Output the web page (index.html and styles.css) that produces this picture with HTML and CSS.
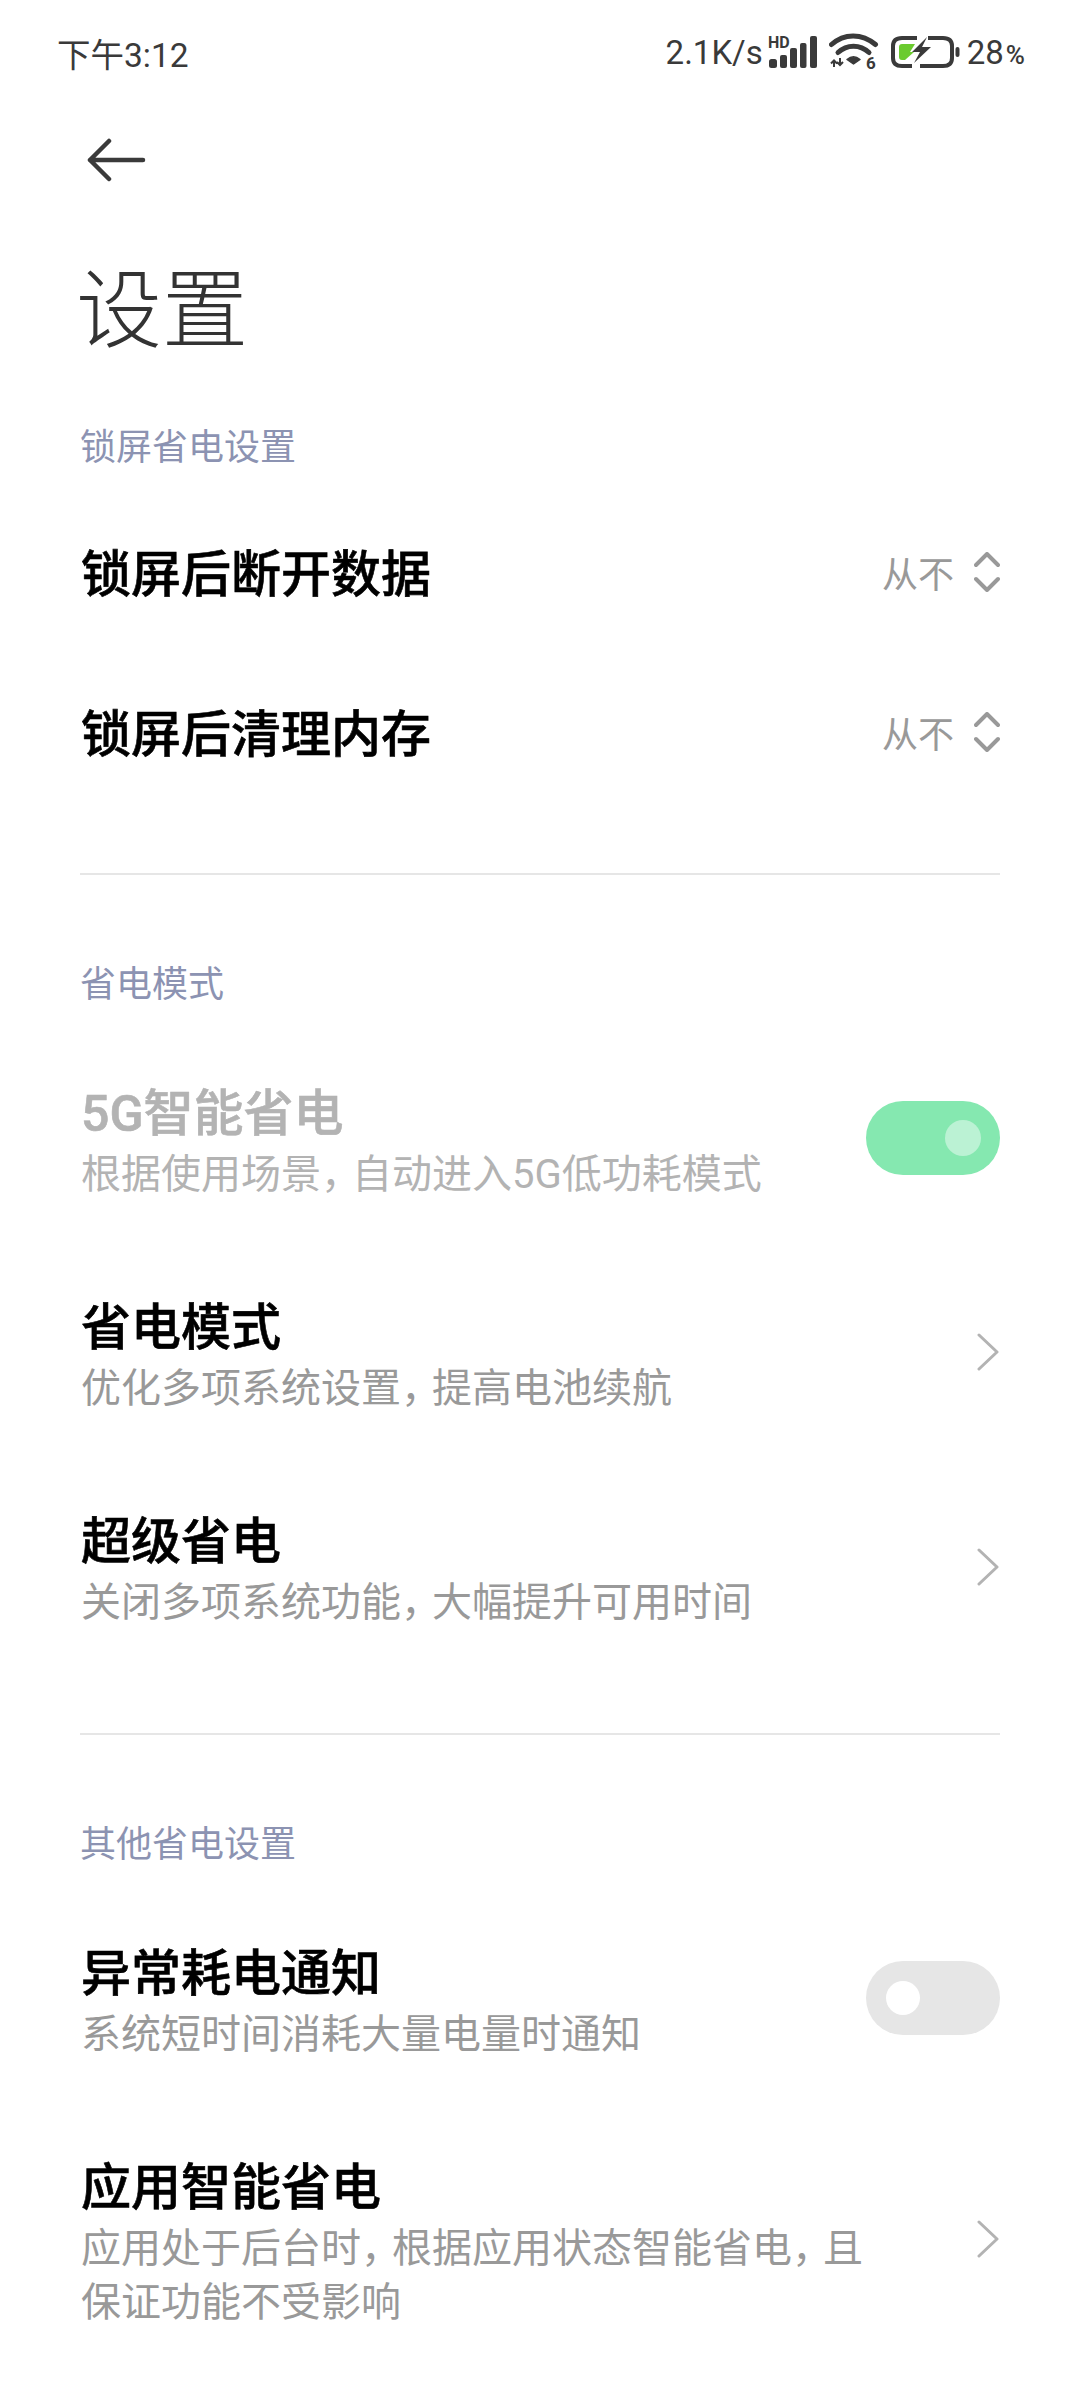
FILE: index.html
```html
<!DOCTYPE html>
<html lang="zh-CN">
<head>
<meta charset="utf-8">
<title>设置</title>
<link rel="stylesheet" href="styles.css">
</head>
<body>
<div class="status">
  <span class="time">下午3:12</span>
  <div class="status-right">
    <span class="speed">2.1K/s</span>
    <svg class="ic-signal" width="50" height="40" viewBox="0 -3 50 40">
      <text x="0" y="13" class="hd">HD</text>
      <rect x="1" y="24" width="8" height="9" rx="2.5" fill="#3a3a3a"/>
      <rect x="12" y="20" width="7" height="13" rx="2" fill="#3a3a3a"/>
      <rect x="22" y="13" width="7" height="20" rx="2" fill="#3a3a3a"/>
      <rect x="32" y="8" width="6.500" height="25" rx="2" fill="#3a3a3a"/>
      <rect x="42" y="1" width="7" height="32" rx="2" fill="#3a3a3a"/>
    </svg>
    <svg class="ic-wifi" width="50" height="42" viewBox="0 -3 50 42">
      <path d="M2.500 10.500C15-1 33-1 46.500 10.500" fill="none" stroke="#3a3a3a" stroke-width="5" stroke-linecap="round"/>
      <path d="M9 18.500C18 10 31 10 40 18.500" fill="none" stroke="#3a3a3a" stroke-width="5" stroke-linecap="round"/>
      <path d="M18 25.500C22 22 27 22 31 25.500L24.500 30Z" fill="#3a3a3a" stroke="#3a3a3a" stroke-width="1.500" stroke-linejoin="round"/>
      <path d="M5 27v6M2 29.500l3-3 3 3M11 24v7M8 28l3 3 3-3" fill="none" stroke="#3a3a3a" stroke-width="2"/>
      <text x="37" y="35" class="six">6</text>
    </svg>
    <svg class="ic-batt" width="70" height="32" viewBox="0 0 70 32">
      <path d="M27 2H12C6 2 3 5 3 10V22C3 27 6 30 12 30H22" fill="none" stroke="#3a3a3a" stroke-width="4"/>
      <path d="M38 2H53C59 2 62 5 62 10V22C62 27 59 30 53 30H30" fill="none" stroke="#3a3a3a" stroke-width="4"/>
      <path d="M9 11C9 9 10 8 12 8H25L20 16H24L15 24H12C10 24 9 23 9 21Z" fill="#6bcb2f"/>
      <path d="M37 1L22 16H30L24 27L41 11H32Z" fill="#3a3a3a"/>
      <rect x="65.500" y="11" width="4" height="10" rx="2" fill="#3a3a3a"/>
    </svg>
    <span class="pct">28<small>%</small></span>
  </div>
</div>

<div class="nav">
  <svg width="60" height="44" viewBox="0 0 60 44">
    <path d="M3 22H56M22 3L3 22L22 41" fill="none" stroke="#3a3a3a" stroke-width="4.500" stroke-linecap="round" stroke-linejoin="round"/>
  </svg>
</div>

<h1 class="page-title">设置</h1>

<div class="section-head first">锁屏省电设置</div>
<div class="row-single">
  <span class="row-title">锁屏后断开数据</span>
  <span class="value">从不</span>
  <svg class="updown" width="26" height="40" viewBox="0 0 26 40"><path d="M2 13L13 2L24 13M2 27L13 38L24 27" fill="none" stroke="#999" stroke-width="4" stroke-linecap="round" stroke-linejoin="round"/></svg>
</div>
<div class="row-single">
  <span class="row-title">锁屏后清理内存</span>
  <span class="value">从不</span>
  <svg class="updown" width="26" height="40" viewBox="0 0 26 40"><path d="M2 13L13 2L24 13M2 27L13 38L24 27" fill="none" stroke="#999" stroke-width="4" stroke-linecap="round" stroke-linejoin="round"/></svg>
</div>
<div class="divider"></div>

<div class="section-head">省电模式</div>
<div class="row disabled">
  <div class="row-text">
    <div class="row-title">5G智能省电</div>
    <div class="row-sub">根据使用场景<span class="comma">，</span>自动进入5G低功耗模式</div>
  </div>
  <div class="toggle on"><span class="knob"></span></div>
</div>
<div class="row">
  <div class="row-text">
    <div class="row-title">省电模式</div>
    <div class="row-sub">优化多项系统设置<span class="comma">，</span>提高电池续航</div>
  </div>
  <svg class="chev" width="22" height="38" viewBox="0 0 22 38"><path d="M2 2L20 19L2 36" fill="none" stroke="#b3b3b3" stroke-width="3" stroke-linecap="round" stroke-linejoin="round"/></svg>
</div>
<div class="row">
  <div class="row-text">
    <div class="row-title">超级省电</div>
    <div class="row-sub">关闭多项系统功能<span class="comma">，</span>大幅提升可用时间</div>
  </div>
  <svg class="chev" width="22" height="38" viewBox="0 0 22 38"><path d="M2 2L20 19L2 36" fill="none" stroke="#b3b3b3" stroke-width="3" stroke-linecap="round" stroke-linejoin="round"/></svg>
</div>
<div class="divider"></div>

<div class="section-head">其他省电设置</div>
<div class="row">
  <div class="row-text">
    <div class="row-title">异常耗电通知</div>
    <div class="row-sub">系统短时间消耗大量电量时通知</div>
  </div>
  <div class="toggle off"><span class="knob"></span></div>
</div>
<div class="row tall">
  <div class="row-text">
    <div class="row-title">应用智能省电</div>
    <div class="row-sub">应用处于后台时<span class="comma">，</span>根据应用状态智能省电<span class="comma">，</span>且保证功能不受影响</div>
  </div>
  <svg class="chev" width="22" height="38" viewBox="0 0 22 38"><path d="M2 2L20 19L2 36" fill="none" stroke="#b3b3b3" stroke-width="3" stroke-linecap="round" stroke-linejoin="round"/></svg>
</div>
</body>
</html>
```

FILE: styles.css
```css
* { box-sizing: border-box; }
html, body { margin: 0; padding: 0; background: #fff; }
body {
  width: 1080px;
  height: 2400px;
  overflow: hidden;
  font-family: Roboto, "Noto Sans CJK SC", sans-serif;
  color: #000;
}
.status {
  height: 104px;
  padding: 0 55px 0 57px;
  display: flex;
  align-items: center;
  justify-content: space-between;
  color: #3a3a3a;
  font-size: 33px;
}
.time { font-size: 33.500px; }
.status-right { display: flex; align-items: center; }
.speed { margin-right: 5px; }
.ic-wifi { margin-left: 11px; }
.ic-batt { margin-left: 11px; }
.pct { margin-left: 7px; }
.pct small { font-size: 26px; font-weight: 500; margin-left: 2px; }
.hd { font: 700 16px Roboto, sans-serif; fill: #3a3a3a; }
.six { font: 700 17px Roboto, sans-serif; fill: #3a3a3a; }
.nav { height: 112px; padding-left: 87px; display: flex; align-items: center; }
.page-title {
  margin: 37px 0 0;
  padding-left: 76px;
  height: 117px;
  line-height: 117px;
  font-size: 86px;
  font-weight: 300;
  color: #333;
}
.section-head {
  height: 60px;
  line-height: 60px;
  margin: 0 0 16px;
  padding-left: 80px;
  font-size: 36px;
  color: #8c93b2;
}
.section-head.first { margin-top: 48px; }
.row-single {
  height: 160px;
  padding: 0 80px;
  display: flex;
  align-items: center;
}
.row-title {
  font-size: 50px;
  font-weight: 500;
  line-height: 64px;
  color: #000;
  -webkit-text-stroke: 0.6px currentColor;
}
.row-single .row-title { flex: 1; padding-top: 2px; padding-left: 1px; }
.value { font-size: 36px; color: #999; margin-right: 20px; margin-bottom: 4px; }
.updown { margin-bottom: 4px; }
.divider { height: 2px; margin: 59px 80px 80px; background: #e6e6e6; }
.row {
  height: 214.340px;
  padding: 0 80px;
  display: flex;
  align-items: center;
  justify-content: space-between;
}
.row-text { width: 790px; padding-top: 7px; padding-left: 1px; }
.row .row-title { margin-bottom: 2px; }
.row-sub {
  font-size: 40px;
  line-height: 54px;
  color: #999;
}
.comma { font-feature-settings: "halt"; margin-right: 11px; }
.chev { margin-right: 1px; }
.row.tall { height: 268px; }
.row.disabled .row-title, .row.disabled .row-sub { color: #b3b3b3; }
.toggle {
  width: 134px;
  height: 74px;
  border-radius: 37px;
  display: flex;
  align-items: center;
  padding: 0 19px;
}
.toggle.on { background: #85e8b0; justify-content: flex-end; }
.toggle.off { background: #e6e6e6; padding: 0 20px; }
.knob { width: 36px; height: 36px; border-radius: 50%; }
.on .knob { background: #bbf2d4; }
.off .knob { background: #fff; width: 34px; height: 34px; }
```
